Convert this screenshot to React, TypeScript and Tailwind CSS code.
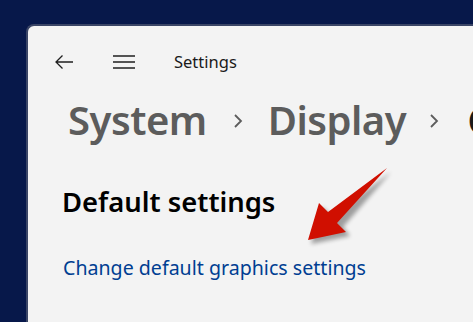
import React from "react";

export default function App() {
  const font = { fontFamily: '"Noto Sans", "Open Sans", sans-serif' };
  return (
    <div className="relative w-[473px] h-[322px] overflow-hidden bg-[#07184a] pt-[24px] pl-[26px]" style={font}>
      <div className="h-full w-full overflow-hidden bg-[#f3f3f3] rounded-tl-[8px] border-l-2 border-t-2 border-[#3a4566] flex flex-col">
        <div className="flex items-center h-[70px] pl-[26px] pt-[2px] shrink-0">
          <svg width="20" height="16" viewBox="0 0 20 16" className="shrink-0 text-[#1f1f1f]">
            <path d="M19 8H2M8.5 1.5L2 8l6.5 6.5" fill="none" stroke="currentColor" strokeWidth="1.3" />
          </svg>
          <svg width="24" height="16" viewBox="0 0 24 16" className="shrink-0 ml-[38px] text-[#1f1f1f]">
            <path d="M1 2h22M1 8h22M1 14h22" fill="none" stroke="currentColor" strokeWidth="1.4" />
          </svg>
          <span className="ml-[38px] text-[16.5px] text-[#1a1a1a]">Settings</span>
        </div>
        <div className="flex items-center whitespace-nowrap pl-[40px] mt-[-2px] h-[52px] shrink-0 text-[40px] font-semibold leading-none tracking-[-0.5px]">
          <span className="shrink-0 text-[#5c5c5c]">System</span>
          <svg width="10" height="16" viewBox="0 0 10 16" className="shrink-0 ml-[26px] mr-[25px] mt-[2px]">
            <path d="M2 2l6 6-6 6" fill="none" stroke="#5c5c5c" strokeWidth="1.8" />
          </svg>
          <span className="shrink-0 text-[#5c5c5c]">Display</span>
          <svg width="10" height="16" viewBox="0 0 10 16" className="shrink-0 ml-[23px] mr-[28px] mt-[2px]">
            <path d="M2 2l6 6-6 6" fill="none" stroke="#5c5c5c" strokeWidth="1.8" />
          </svg>
          <span className="shrink-0 text-[#1a1a1a]">Graphics</span>
        </div>
        <div className="pl-[34px] mt-[42px] text-[27.4px] font-semibold text-black leading-none">Default settings</div>
        <div className="pl-[35px] mt-[43px] text-[19.6px] text-[#003e92] leading-none">Change default graphics settings</div>
      </div>
      <svg className="absolute left-0 top-0" width="473" height="322" viewBox="0 0 473 322">
        <defs>
          <filter id="sh" x="-20%" y="-20%" width="150%" height="150%">
            <feGaussianBlur stdDeviation="2.2" />
          </filter>
        </defs>
        <polygon points="311,244 322,207 332,216 391,172 343,227 350,236" fill="#000" opacity="0.35" filter="url(#sh)" />
        <polygon points="308,240 319,203 328,212 387,168 337,223 346,232" fill="#d00f00" />
      </svg>
    </div>
  );
}
